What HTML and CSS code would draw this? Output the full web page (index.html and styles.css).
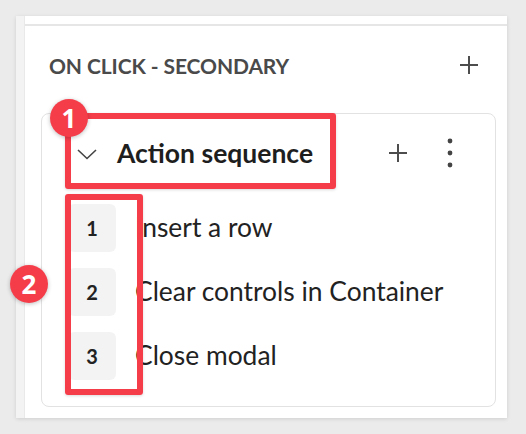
FILE: index.html
```html
<!DOCTYPE html>
<html>
<head>
<meta charset="utf-8">
<link rel="stylesheet" href="styles.css">
</head>
<body>
<div class="panel">
  <div class="strip"></div>
  <div class="content">
    <div class="topline"></div>
    <div class="section-head">
      <span class="section-title">ON CLICK - SECONDARY</span>
      <svg class="plus" width="18" height="18" viewBox="0 0 18 18"><path d="M9 0V18M0 9H18" stroke="#4d4d4d" stroke-width="2"/></svg>
    </div>
    <div class="card">
      <div class="card-head">
        <svg class="chev" width="20" height="11" viewBox="0 0 20 11"><path d="M1 1L10 9.5L19 1" fill="none" stroke="#444" stroke-width="1.6"/></svg>
        <span class="card-title">Action sequence</span>
        <svg class="plus2" width="18" height="18" viewBox="0 0 18 18"><path d="M9 0V18M0 9H18" stroke="#4d4d4d" stroke-width="2"/></svg>
        <svg class="kebab" width="6" height="30" viewBox="0 0 6 30"><circle cx="3" cy="3" r="2.4" fill="#444"/><circle cx="3" cy="15" r="2.4" fill="#444"/><circle cx="3" cy="27" r="2.4" fill="#444"/></svg>
      </div>
      <div class="steps">
        <div class="step"><span class="num">1</span><span class="label">Insert a row</span></div>
        <div class="step"><span class="num">2</span><span class="label">Clear controls in Container</span></div>
        <div class="step"><span class="num">3</span><span class="label">Close modal</span></div>
      </div>
    </div>
  </div>
</div>
<div class="hl hl1"></div>
<div class="hl hl2"></div>
<div class="badge b1">1</div>
<div class="badge b2">2</div>
</body>
</html>
```
FILE: styles.css
```css
html, body {
  margin: 0;
  padding: 0;
}
body {
  background: #ebebeb;
  width: 526px;
  height: 434px;
  position: relative;
  overflow: hidden;
  font-family: "Source Sans Pro", Lato, "Noto Sans", sans-serif;
}
.panel {
  position: absolute;
  left: 16px;
  top: 16px;
  width: 491px;
  height: 402px;
  background: #fff;
  display: flex;
  box-shadow: 0 1px 4px rgba(0,0,0,0.12);
}
.strip {
  width: 9px;
  background: #f3f3f3;
  border-right: 1px solid #e9e9e9;
  box-sizing: border-box;
}
.content {
  flex: 1;
  padding-top: 8px;
}
.topline {
  height: 2px;
  background: #e6e6e6;
}
.section-head {
  display: flex;
  align-items: center;
  justify-content: space-between;
  padding: 0 29px 0 24px;
  height: 76px;
}
.section-title {
  font-weight: 700;
  font-size: 21px;
  color: #4a4a4a;
  letter-spacing: -0.1px;
  margin-top: 2px;
}
.plus { margin-top: 2px; }
.card {
  margin: 11px 11px 0 16px;
  border: 1px solid #e2e2e2;
  border-radius: 8px;
  height: 294px;
  box-sizing: border-box;
}
.card-head {
  display: flex;
  align-items: center;
  height: 78px;
  padding-left: 35px;
}
.chev { margin-top: 2px; }
.card-title {
  font-weight: 700;
  font-size: 26.5px;
  color: #1e1e1e;
  margin-left: 20px;
}
.plus2 { margin-left: auto; }
.kebab { margin: 0 42px 0 40px; }
.steps {
  display: flex;
  flex-direction: column;
  gap: 16px;
  padding-left: 26px;
  margin-top: 12px;
}
.step {
  display: flex;
  align-items: center;
  height: 48px;
}
.num {
  width: 48px;
  height: 48px;
  border-radius: 6px;
  background: #f3f3f3;
  display: flex;
  align-items: center;
  justify-content: center;
  font-weight: 700;
  font-size: 20px;
  color: #222;
}
.label {
  margin-left: 19px;
  font-size: 26.4px;
  color: #222;
  margin-top: -3px;
}
.hl {
  position: absolute;
  border: 6px solid #f53d4a;
  border-radius: 3px;
  box-sizing: border-box;
  box-shadow: 0 1px 3px rgba(0,0,0,0.15);
}
.hl1 { left: 65px; top: 113px; width: 271px; height: 76px; }
.hl2 { left: 65px; top: 194px; width: 78px; height: 201px; }
.badge {
  position: absolute;
  width: 38px;
  height: 38px;
  border-radius: 50%;
  background: #f53d4a;
  color: #fff;
  font-weight: 700;
  font-size: 26px;
  display: flex;
  align-items: center;
  justify-content: center;
  box-shadow: 0 1px 4px rgba(0,0,0,0.25);
  font-family: "Noto Sans", sans-serif;
}
.b1 { left: 50px; top: 99px; }
.b2 { left: 10px; top: 265px; }
```
